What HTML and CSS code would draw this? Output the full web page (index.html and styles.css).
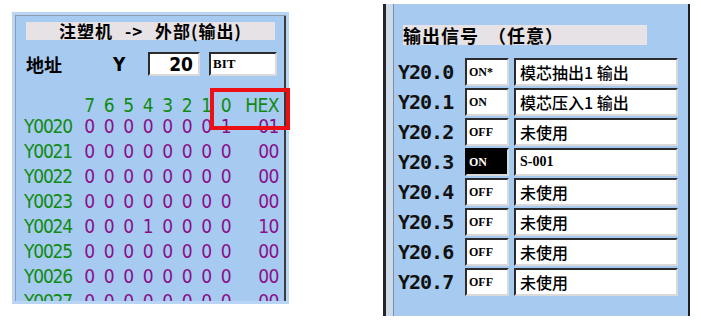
FILE: index.html
```html
<!DOCTYPE html>
<html>
  <head>
    <meta charset="UTF-8"/>
    <title>输出监视</title>
    <link rel="stylesheet" href="styles.css">
  </head>
  <body>
    <div class="page">
      <div class="io-wrap">
        <section class="io-panel">
          <div class="io-title">注塑机 -&gt; 外部(输出)</div>
          <div class="addr-row">
            <span class="addr-label">地址</span>
            <span class="addr-y">Y</span>
            <span class="field field-num">20</span>
            <span class="field field-unit">BIT</span>
          </div>
          <div class="bit-grid">
            <span></span><span class="bit-head">7</span><span class="bit-head">6</span><span class="bit-head">5</span><span class="bit-head">4</span><span class="bit-head">3</span><span class="bit-head">2</span><span class="bit-head">1</span><span class="bit-head">0</span><span class="bit-head hex">HEX</span>

            <span class="addr">Y0020</span><span class="bit">0</span><span class="bit">0</span><span class="bit">0</span><span class="bit">0</span><span class="bit">0</span><span class="bit">0</span><span class="bit">0</span><span class="bit">1</span><span class="bit hex">01</span>
            <span class="addr">Y0021</span><span class="bit">0</span><span class="bit">0</span><span class="bit">0</span><span class="bit">0</span><span class="bit">0</span><span class="bit">0</span><span class="bit">0</span><span class="bit">0</span><span class="bit hex">00</span>
            <span class="addr">Y0022</span><span class="bit">0</span><span class="bit">0</span><span class="bit">0</span><span class="bit">0</span><span class="bit">0</span><span class="bit">0</span><span class="bit">0</span><span class="bit">0</span><span class="bit hex">00</span>
            <span class="addr">Y0023</span><span class="bit">0</span><span class="bit">0</span><span class="bit">0</span><span class="bit">0</span><span class="bit">0</span><span class="bit">0</span><span class="bit">0</span><span class="bit">0</span><span class="bit hex">00</span>
            <span class="addr">Y0024</span><span class="bit">0</span><span class="bit">0</span><span class="bit">0</span><span class="bit">1</span><span class="bit">0</span><span class="bit">0</span><span class="bit">0</span><span class="bit">0</span><span class="bit hex">10</span>
            <span class="addr">Y0025</span><span class="bit">0</span><span class="bit">0</span><span class="bit">0</span><span class="bit">0</span><span class="bit">0</span><span class="bit">0</span><span class="bit">0</span><span class="bit">0</span><span class="bit hex">00</span>
            <span class="addr">Y0026</span><span class="bit">0</span><span class="bit">0</span><span class="bit">0</span><span class="bit">0</span><span class="bit">0</span><span class="bit">0</span><span class="bit">0</span><span class="bit">0</span><span class="bit hex">00</span>
            <span class="addr">Y0027</span><span class="bit">0</span><span class="bit">0</span><span class="bit">0</span><span class="bit">0</span><span class="bit">0</span><span class="bit">0</span><span class="bit">0</span><span class="bit">0</span><span class="bit hex">00</span>
          </div>
        </section>
        <div class="hex-mark"></div>
      </div>

      <section class="sig-panel">
        <div class="sig-title">输出信号 （任意）</div>
        <div class="sig-list">
          <div class="sig-row"><span class="sig-addr">Y20.0</span><span class="field sig-state">ON*</span><span class="field sig-name">模芯抽出1 输出</span></div>
          <div class="sig-row"><span class="sig-addr">Y20.1</span><span class="field sig-state">ON</span><span class="field sig-name">模芯压入1 输出</span></div>
          <div class="sig-row"><span class="sig-addr">Y20.2</span><span class="field sig-state">OFF</span><span class="field sig-name">未使用</span></div>
          <div class="sig-row"><span class="sig-addr">Y20.3</span><span class="field sig-state active">ON</span><span class="field sig-name latin">S-001</span></div>
          <div class="sig-row"><span class="sig-addr">Y20.4</span><span class="field sig-state">OFF</span><span class="field sig-name">未使用</span></div>
          <div class="sig-row"><span class="sig-addr">Y20.5</span><span class="field sig-state">OFF</span><span class="field sig-name">未使用</span></div>
          <div class="sig-row"><span class="sig-addr">Y20.6</span><span class="field sig-state">OFF</span><span class="field sig-name">未使用</span></div>
          <div class="sig-row"><span class="sig-addr">Y20.7</span><span class="field sig-state">OFF</span><span class="field sig-name">未使用</span></div>
        </div>
      </section>
    </div>
  </body>
</html>
```

FILE: styles.css
```css
body {
  margin: 0;
  background-color: #ffffff;
  font-family: "Liberation Sans", "Noto Sans CJK SC", sans-serif;
}

.page {
  display: flex;
  align-items: flex-start;
  padding: 4px 0 0 12px;
}

/* 左: 注塑机 -> 外部 */
.io-wrap {
  position: relative;
  margin-top: 8px;
}

.io-panel {
  box-sizing: border-box;
  width: 277px;
  height: 292px;
  overflow: hidden;
  background-color: #a6caf0;
  border: 3px solid #b9d5f5;
  box-shadow: inset 1px 1px 0 #8d9aab, inset -2px 0 0 #3a3a3a;
}

.io-title {
  margin: 7px 11px 0 11px;
  height: 18px;
  line-height: 18px;
  background-color: #e6e2e6;
  text-align: center;
  font-family: "Noto Sans CJK SC", sans-serif;
  font-size: 17px;
  font-weight: 700;
  word-spacing: 7px;
  letter-spacing: 1px;
  color: #000;
}

.addr-row {
  display: flex;
  align-items: center;
  margin-top: 12px;
  padding-left: 11px;
  height: 24px;
}

.addr-label {
  width: 87px;
  font-family: "Noto Sans CJK SC", sans-serif;
  font-size: 18px;
  font-weight: 700;
}

.addr-y {
  width: 35px;
  font-family: "Liberation Sans Narrow", "DejaVu Sans Condensed", "Liberation Sans", sans-serif;
  font-stretch: condensed;
  font-size: 19px;
  font-weight: 700;
}

.field {
  box-sizing: border-box;
  display: flex;
  align-items: center;
  height: 100%;
  background-color: #fff;
  border-top: 2px solid #2b2b2b;
  border-left: 2px solid #2b2b2b;
  border-bottom: 2px solid #d9d9d9;
  border-right: 2px solid #d9d9d9;
}

.field-num {
  width: 52px;
  justify-content: flex-end;
  padding-right: 5px;
  font-family: "Liberation Sans Narrow", "DejaVu Sans Condensed", "Liberation Sans", sans-serif;
  font-stretch: condensed;
  font-size: 19px;
  font-weight: 700;
}

.field-unit {
  width: 68px;
  margin-left: 9px;
  padding-left: 2px;
  font-family: "Liberation Serif", serif;
  font-size: 13px;
  font-weight: 700;
}

.bit-grid {
  display: grid;
  grid-template-columns: 56px repeat(8, 19.5px) 43px;
  grid-template-rows: 17px;
  grid-auto-rows: 25px;
  align-items: center;
  margin-top: 20px;
  padding-left: 9px;
  font-family: "Liberation Sans Narrow", "DejaVu Sans Condensed", "Liberation Sans", sans-serif;
  font-stretch: condensed;
  font-size: 19px;
}

.bit-head,
.bit {
  text-align: center;
}

.bit-head,
.addr {
  color: #118a11;
}

.addr {
  letter-spacing: -1.2px;
}

.bit {
  color: #8a108a;
}

.hex {
  text-align: right;
  letter-spacing: -0.5px;
}

.hex-mark {
  position: absolute;
  left: 198px;
  top: 76px;
  width: 80px;
  height: 42px;
  box-sizing: border-box;
  border: 4px solid #ec0f16;
}

/* 右: 输出信号 */
.sig-panel {
  box-sizing: border-box;
  width: 307px;
  height: 312px;
  margin-left: 94px;
  padding: 21px 2px 0 8px;
  border-left: 3px solid #262626;
  border-right: 2px solid #1e1e1e;
  background: linear-gradient(to right, #ccd9ea 0 7px, #7d8ea3 7px 8px, #a6caf0 8px);
}

.sig-title {
  width: 244px;
  height: 20px;
  margin-left: 9px;
  line-height: 20px;
  background-color: #e6e2e6;
  font-family: "Noto Sans CJK SC", sans-serif;
  font-size: 18px;
  font-weight: 700;
  letter-spacing: 1px;
  word-spacing: 4px;
  color: #000;
}

.sig-list {
  display: flex;
  flex-direction: column;
  gap: 2px;
  margin-top: 13px;
  padding-left: 4px;
}

.sig-row {
  display: flex;
  align-items: center;
  height: 28px;
}

.sig-addr {
  width: 67px;
  font-family: "DejaVu Sans Mono", monospace;
  font-size: 20px;
  font-weight: 700;
  letter-spacing: -1px;
  color: #111;
}

.sig-state {
  width: 44px;
  padding-left: 2px;
  font-family: "Liberation Serif", serif;
  font-size: 12px;
  font-weight: 700;
}

.sig-state.active {
  background-color: #000;
  color: #fff;
  border-top-color: #000;
  border-left-color: #000;
}

.sig-name {
  width: 164px;
  margin-left: 5px;
  padding-left: 4px;
  font-family: "Noto Sans CJK SC", sans-serif;
  font-size: 16px;
  font-weight: 500;
  white-space: nowrap;
}

.sig-name.latin {
  font-family: "Liberation Serif", serif;
  font-size: 14px;
  font-weight: 700;
}
```
